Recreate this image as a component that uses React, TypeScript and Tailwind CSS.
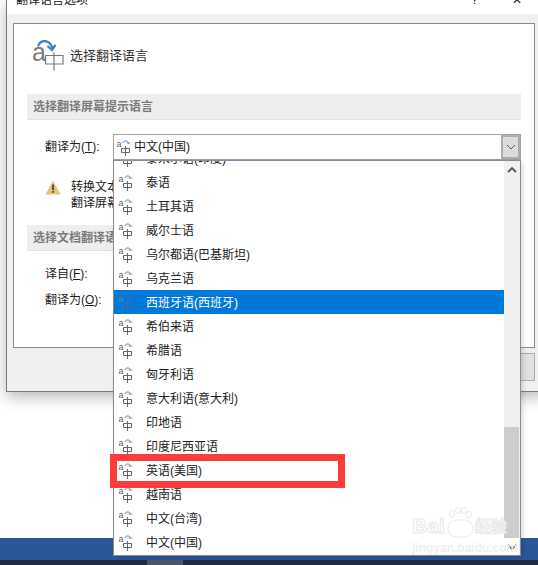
const FONT = "font-['Liberation_Sans','Noto_Sans_CJK_SC',sans-serif]";

const languages = [
  '泰米尔语(印度)',
  '泰语',
  '土耳其语',
  '威尔士语',
  '乌尔都语(巴基斯坦)',
  '乌克兰语',
  '西班牙语(西班牙)',
  '希伯来语',
  '希腊语',
  '匈牙利语',
  '意大利语(意大利)',
  '印地语',
  '印度尼西亚语',
  '英语(美国)',
  '越南语',
  '中文(台湾)',
  '中文(中国)',
];

const BigIcon = () => (
  <svg width="32" height="32" viewBox="0 0 32 32" fill="none" className="shrink-0">
    <text x="0" y="21" fontSize="25" fill="#7a7a7a" fontFamily="Liberation Sans, sans-serif">a</text>
    <path d="M6 6.5 C8 -0.5 17 -1.5 20.5 8" stroke="#3f7fbf" strokeWidth="2.2" />
    <path d="M15.5 6 L20 10 L23.5 5" stroke="#3f7fbf" strokeWidth="2.2" />
    <path d="M13.5 15.5 H31 V24 H13.5 Z M22 12.5 V30.5" stroke="#7a7a7a" strokeWidth="1.2" />
  </svg>
);

const SmallIcon = ({ muted }: { muted?: boolean }) => (
  <svg width="16" height="20" viewBox="0 0 16 20" fill="none" className="shrink-0">
    <text x="0.5" y="10" fontSize="9" fill={muted ? '#5b86b8' : '#666666'} fontFamily="Liberation Sans, sans-serif">a</text>
    <path d="M7 6 C7.5 3.5 11.5 3 12.5 6" stroke={muted ? '#2f6fb0' : '#4a86c0'} strokeWidth="1" />
    <path d="M11 5.5 L12.5 7 L14 5.5" stroke={muted ? '#2f6fb0' : '#4a86c0'} strokeWidth="1" />
    <path d="M5.5 11.5 H13.5 V15.5 H5.5 Z M9.5 9 V19" stroke={muted ? '#3f70a8' : '#666666'} strokeWidth="1" />
  </svg>
);

const Chevron = ({ up, color = '#555555', width = 1.8 }: { up?: boolean; color?: string; width?: number }) => (
  <svg width="10" height="6" viewBox="0 0 10 6" fill="none">
    <path d={up ? 'M1 5 L5 1 L9 5' : 'M1 1 L5 5 L9 1'} stroke={color} strokeWidth={width} />
  </svg>
);

const SectionHeader = ({ children }: { children: string }) => (
  <div className="flex h-[26px] items-center border-b border-[#e2e2e2] bg-[#eeeeee] pl-[6px] text-[12px] font-bold text-[#7b7b7b]">
    {children}
  </div>
);

const Label = ({ before, keyName }: { before: string; keyName: string }) => (
  <div className="text-[12px] leading-[18px] text-[#222222]">
    {before}(<span className="underline">{keyName}</span>):
  </div>
);

export default function App() {
  return (
    <div className={`relative flex h-[565px] w-[538px] flex-col overflow-hidden bg-white ${FONT}`}>
      {/* dialog */}
      <div className="ml-[6px] h-[392px] w-[540px] shrink-0 border-b border-l border-[#7a7a7a] bg-[#f0f0f0] shadow-[0_5px_14px_rgba(0,0,0,0.28)]">
        <div className="flex h-[14px] items-start justify-between overflow-hidden bg-white pl-[9px] pr-[24px]">
          <span className="-mt-[9px] text-[12px] text-[#222222]">翻译语言选项</span>
          <div className="-mt-[9px] flex items-center gap-[34px] text-[12px] text-[#222222]">
            <span>?</span>
            <span>✕</span>
          </div>
        </div>

        {/* content panel */}
        <div className="ml-[6px] mt-[9px] h-[325px] w-[522px] border border-[#8a8a8a] bg-white pl-[13px] pr-[13px]">
          <div className="flex h-[70px] items-start gap-[6px] pl-[5px] pt-[16px]">
            <BigIcon />
            <span className="mt-[7px] text-[13px] leading-[18px] text-[#333333]">选择翻译语言</span>
          </div>
          <SectionHeader>选择翻译屏幕提示语言</SectionHeader>

          <div className="mt-[14px] flex h-[26px] items-center">
            <div className="w-[86px] pl-[18px]">
              <Label before="翻译为" keyName="T" />
            </div>
            <div className="flex h-[26px] flex-1 items-center border border-[#a3a3a3] pl-[2px]">
              <SmallIcon />
              <span className="ml-[2px] text-[12px] text-[#222222]">中文(中国)</span>
              <div className="ml-auto flex h-full w-[19px] items-center justify-center border-2 border-[#adadad] bg-[#dcdcdc]">
                <Chevron color="#606060" width={1} />
              </div>
            </div>
          </div>

          <div className="mt-[18px] flex gap-[10px] pl-[18px]">
            <svg width="16" height="15" viewBox="0 0 16 15" className="mt-[2px] shrink-0">
              <path d="M8 0.5 L15.5 14.5 H0.5 Z" fill="#e8c07f" />
              <path d="M7.2 4.5 H8.8 V10 H7.2 Z M7.2 11 H8.8 V12.8 H7.2 Z" fill="#333333" />
            </svg>
            <p className="mt-[1px] text-[12px] leading-[16px] text-[#222222]">
              转换文本和内容时使用
              <br />
              翻译屏幕提示语言
            </p>
          </div>

          <div className="mt-[14px]">
            <SectionHeader>选择文档翻译语言</SectionHeader>
          </div>
          <div className="mt-[14px] pl-[18px]">
            <Label before="译自" keyName="F" />
          </div>
          <div className="mt-[8px] pl-[18px]">
            <Label before="翻译为" keyName="O" />
          </div>
        </div>

        {/* buttons */}
        <div className="mt-[5px] flex">
          <div className="ml-[513px] h-[28px] w-[15px] border border-[#adadad] bg-[#e1e1e1]" />
        </div>
      </div>

      <div className="flex-1" />

      {/* word status bar */}
      <div className="h-[22px] shrink-0 bg-[#2b579a]" />
      <div className="flex h-[5px] shrink-0 bg-[#1f2d3d]">
        <div className="ml-[147px] h-full w-[36px] bg-[#4a5866]" />
      </div>

      {/* open dropdown */}
      <div className="absolute left-[113px] top-[160px] flex h-[396px] w-[408px] overflow-hidden border border-[#8a8a98] bg-white shadow-[2px_2px_5px_rgba(0,0,0,0.15)]">
        <div className="min-w-0 flex-1 overflow-hidden">
          <div className="-mt-[15px]">
            {languages.map((name) => {
              const active = name === '西班牙语(西班牙)';
              return (
                <div
                  key={name}
                  className={`flex h-[24px] items-center pl-[4px] text-[12px] ${active ? 'bg-[#0078d7] text-white' : 'text-[#222222]'}`}
                >
                  <SmallIcon muted={active} />
                  <span className="ml-[12px] mt-[2px]">{name}</span>
                </div>
              );
            })}
          </div>
        </div>
        <div className="flex w-[16px] shrink-0 flex-col bg-[#f0f0f0] pr-[1px]">
          <div className="flex h-[17px] shrink-0 items-center justify-center">
            <Chevron up />
          </div>
          <div className="mt-[249px] h-[111px] shrink-0 bg-[#cdcdcd]" />
          <div className="flex flex-1 items-center justify-center bg-white">
            <Chevron />
          </div>
        </div>
      </div>

      {/* red annotation box */}
      <div className="absolute left-[110px] top-[454px] h-[34px] w-[235px] border-[7px] border-[#ff3b3b]" />

      {/* watermark */}
      <div className="absolute left-[412px] top-[507px] text-white">
        <div className="flex h-[31px] items-end whitespace-nowrap font-bold [-webkit-text-stroke:1px_#e8e8e8]">
          <span className="text-[21px] leading-[24px]">Bai</span>
          <svg width="30" height="31" viewBox="0 0 30 31" fill="none" stroke="#e8e8e8" strokeWidth="1" className="shrink-0">
            <ellipse cx="7" cy="7" rx="2.5" ry="3.5" />
            <ellipse cx="13" cy="3.5" rx="2.5" ry="3" />
            <ellipse cx="19" cy="3.5" rx="2.5" ry="3" />
            <ellipse cx="24" cy="7.5" rx="2.5" ry="3.5" />
            <rect x="3" y="13" width="25" height="17" rx="8.5" />
          </svg>
          <span className="text-[16px] leading-[22px]">经验</span>
        </div>
        <div className="mt-[4px] whitespace-nowrap text-[12px] font-bold leading-[13px] text-[#eeeeee]">jingyan.baidu.com</div>
      </div>
    </div>
  );
}
